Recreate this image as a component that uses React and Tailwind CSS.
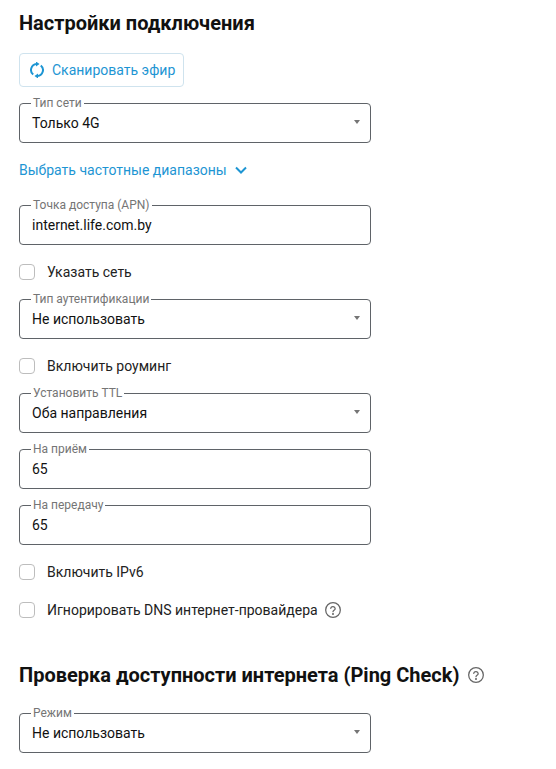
const font = { fontFamily: "Roboto, 'Noto Sans', sans-serif" };

function Field({ label, value, select, className = "" }) {
  return (
    <div className={"relative flex h-10 w-[352px] items-center rounded border border-[#5f6368] pl-3 pr-3 " + className}>
      <span className="absolute left-[11px] top-[-8px] bg-white px-[2px] text-xs leading-[14px] text-[#757575]">{label}</span>
      <span className="text-sm leading-5 text-[#111]">{value}</span>
      {select && (
        <svg className="absolute right-[10px] top-[16px]" width="6" height="4" viewBox="0 0 6 4">
          <path d="M0 0h6L3 4z" fill="#757575" />
        </svg>
      )}
    </div>
  );
}

function Help({ size = 16 }) {
  return (
    <svg className="block" width={size} height={size} viewBox="0 0 24 24" fill="none" stroke="#666" strokeWidth="1.9" strokeLinecap="round" strokeLinejoin="round">
      <circle cx="12" cy="12" r="11" />
      <path d="M8.6 9.4a3.4 3.4 0 0 1 6.7.6c0 2.3-3.3 2.6-3.3 4.6" />
      <circle cx="12" cy="18" r="0.6" fill="#666" />
    </svg>
  );
}

function Check({ label, children, className = "" }) {
  return (
    <label className={"flex h-4 items-center " + className}>
      <span className="h-4 w-4 rounded-[4px] border border-[#bdbdbd] bg-white" />
      <span className="ml-3 text-sm leading-5 text-[#222]">{label}</span>
      {children}
    </label>
  );
}

export default function App() {
  return (
    <div className="h-[769px] w-[556px] overflow-hidden bg-white pl-[19px] pt-[13px]" style={font}>
      <h1 className="text-xl font-bold leading-5 text-[#111]">Настройки подключения</h1>

      <button className="mt-5 flex h-[34px] w-[165px] items-center rounded border border-[#cfe3ee] pl-[9px] text-sm text-[#1d95d3]">
        <svg className="block" width="16" height="16" viewBox="0 0 16 16" fill="none" stroke="#1d95d3" strokeWidth="2">
          <path d="M4.2 12.6A6 6 0 0 1 7.5 2" />
          <path d="M11.8 3.4A6 6 0 0 1 8.5 14" />
          <path d="M7 -0.5L10.5 2L7 4.5z" fill="#1d95d3" stroke="none" />
          <path d="M9 11.5L5.5 14L9 16.5z" fill="#1d95d3" stroke="none" />
        </svg>
        <span className="ml-[7px]">Сканировать эфир</span>
      </button>

      <Field label="Тип сети" value="Только 4G" select className="mt-4" />

      <div className="mt-[17px] flex h-5 items-center text-sm text-[#1d95d3]">
        Выбрать частотные диапазоны
        <svg className="ml-2" width="12" height="8" viewBox="0 0 12 8" fill="none" stroke="#1d95d3" strokeWidth="2">
          <path d="M1 1.5l5 5 5-5" />
        </svg>
      </div>

      <Field label="Точка доступа (APN)" value="internet.life.com.by" className="mt-[25px]" />
      <Check label="Указать сеть" className="mt-[19px]" />
      <Field label="Тип аутентификации" value="Не использовать" select className="mt-[19px]" />
      <Check label="Включить роуминг" className="mt-[19px]" />
      <Field label="Установить TTL" value="Оба направления" select className="mt-[19px]" />
      <Field label="На приём" value="65" className="mt-4" />
      <Field label="На передачу" value="65" className="mt-4" />
      <Check label="Включить IPv6" className="mt-[19px]" />
      <Check label="Игнорировать DNS интернет-провайдера" className="mt-[22px]">
        <span className="ml-[7px]"><Help /></span>
      </Check>

      <div className="mt-[47px] flex h-5 items-center">
        <h2 className="text-xl font-bold leading-5 text-[#111]">Проверка доступности интернета (Ping Check)</h2>
        <span className="ml-[9px]"><Help /></span>
      </div>
      <Field label="Режим" value="Не использовать" select className="mt-7" />
    </div>
  );
}
